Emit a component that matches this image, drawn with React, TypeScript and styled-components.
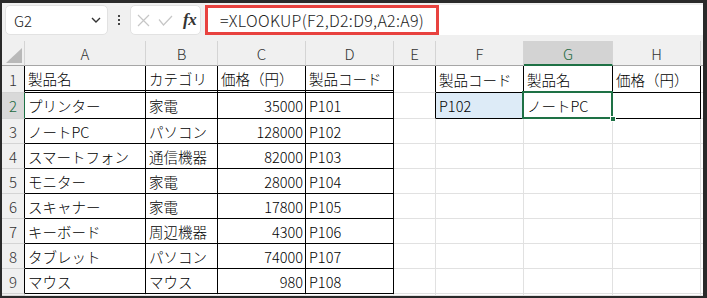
import React from 'react';
import styled, { createGlobalStyle, css } from 'styled-components';

const GlobalStyle = createGlobalStyle`
  html, body {
    margin: 0;
    padding: 0;
    background: #ffffff;
  }
`;

const FONT = `"Noto Sans CJK JP", "Noto Sans", sans-serif`;
const GRID = '#e1e1e1';
const HEAD_LINE = '#d4d4d4';
const GREEN = '#1e7145';

type Row = (string | number)[];

const rows: Row[] = [
  ['製品名', 'カテゴリ', '価格（円）', '製品コード', '', '製品コード', '製品名', '価格（円）'],
  ['プリンター', '家電', 35000, 'P101', '', 'P102', 'ノートPC', ''],
  ['ノートPC', 'パソコン', 128000, 'P102'],
  ['スマートフォン', '通信機器', 82000, 'P103'],
  ['モニター', '家電', 28000, 'P104'],
  ['スキャナー', '家電', 17800, 'P105'],
  ['キーボード', '周辺機器', 4300, 'P106'],
  ['タブレット', 'パソコン', 74000, 'P107'],
  ['マウス', 'マウス', 980, 'P108'],
];

const columns = ['A', 'B', 'C', 'D', 'E', 'F', 'G', 'H'];

export default function App() {
  const sheetRows = [...rows, []];

  return (
    <>
      <GlobalStyle />
      <Frame>
        <FormulaBar>
          <NameBox>
            <span>G2</span>
            <svg width="10" height="6" viewBox="0 0 10 6">
              <path d="M1 1 L5 5 L9 1" fill="none" stroke="#333" strokeWidth="1.4" />
            </svg>
          </NameBox>
          <Dots>
            <i />
            <i />
            <i />
          </Dots>
          <FxBox>
            <svg width="13" height="13" viewBox="0 0 13 13">
              <path d="M1 1 L12 12 M12 1 L1 12" stroke="#c6c6c6" strokeWidth="1.2" fill="none" />
            </svg>
            <svg width="15" height="11" viewBox="0 0 15 11">
              <path d="M1 4.5 L5.5 10 L14 1" stroke="#c6c6c6" strokeWidth="1.2" fill="none" />
            </svg>
            <Fx>fx</Fx>
          </FxBox>
          <FormulaInput>
            <Highlight>=XLOOKUP(F2,D2:D9,A2:A9)</Highlight>
          </FormulaInput>
        </FormulaBar>

        <Sheet>
          <Corner>
            <svg width="16" height="15" viewBox="0 0 16 15">
              <path d="M16 0 L16 15 L0 15 Z" fill="#b9b9b9" />
            </svg>
          </Corner>
          {columns.map((c) => (
            <ColHead key={c} $active={c === 'G'}>
              {c}
            </ColHead>
          ))}
          <ColHead $filler />

          {sheetRows.map((row, ri) => {
            const r = ri + 1;
            const isLast = r === sheetRows.length;
            return (
              <React.Fragment key={r}>
                <RowHead $active={r === 2} $edge={!isLast}>
                  {isLast ? '' : r}
                </RowHead>
                {columns.map((_, ci) => {
                  const c = ci + 1;
                  const v = row[ci];
                  const inT1 = r <= 9 && c <= 4;
                  const inT2 = r <= 2 && c >= 6;
                  const edgeE = r <= 2 && c === 5;
                  return (
                    <Cell
                      key={c}
                      $num={typeof v === 'number'}
                      $right={inT1 || inT2 || edgeE ? '#000' : GRID}
                      $bottom={inT1 || inT2 ? '#000' : GRID}
                      $double={r === 1 && c <= 4}
                      $fill={r === 2 && c === 6 ? '#ddebf7' : undefined}
                      $selected={r === 2 && c === 7}
                    >
                      {v ?? ''}
                    </Cell>
                  );
                })}
                <Cell $right="transparent" $bottom={GRID} />
              </React.Fragment>
            );
          })}
        </Sheet>
      </Frame>
    </>
  );
}

const Frame = styled.div`
  width: 707px;
  height: 298px;
  box-sizing: border-box;
  border-style: solid;
  border-color: #2a2a2a;
  border-width: 3px 4px 2px 2px;
  background: #f0f0f0;
  display: flex;
  flex-direction: column;
  overflow: hidden;
  font-family: ${FONT};
  color: #000;
`;

const FormulaBar = styled.div`
  height: 38px;
  flex: none;
  box-sizing: border-box;
  display: flex;
  align-items: flex-start;
  padding: 2px 0 0 3px;
`;

const NameBox = styled.div`
  width: 103px;
  height: 30px;
  box-sizing: border-box;
  background: #fff;
  border: 1px solid #e2e2e2;
  border-radius: 5px;
  display: flex;
  align-items: center;
  justify-content: space-between;
  padding: 0 6px 0 8px;
  font-size: 15px;
  font-weight: 300;
  color: #222;
`;

const Dots = styled.div`
  width: 22px;
  height: 30px;
  display: flex;
  flex-direction: column;
  align-items: center;
  justify-content: center;
  gap: 2px;
  & > i {
    display: block;
    width: 2px;
    height: 2px;
    background: #444;
  }
`;

const FxBox = styled.div`
  width: 71px;
  height: 30px;
  box-sizing: border-box;
  background: #fff;
  border: 1px solid #e2e2e2;
  border-radius: 5px;
  display: flex;
  align-items: center;
  padding: 0 0 0 6px;
  gap: 8px;
  margin-right: 4px;
`;

const Fx = styled.span`
  font-family: "Liberation Serif", serif;
  font-style: italic;
  font-weight: bold;
  font-size: 17px;
  color: #333;
  margin-left: 2px;
  letter-spacing: -0.5px;
`;

const FormulaInput = styled.div`
  flex: 1;
  height: 30px;
  background: #fff;
  display: flex;
`;

const Highlight = styled.div`
  width: 234px;
  height: 30px;
  box-sizing: border-box;
  border: 3px solid #e8423f;
  display: flex;
  align-items: center;
  padding-left: 12px;
  font-size: 16px;
  font-weight: 300;
  letter-spacing: 0.3px;
  color: #222;
  white-space: nowrap;
`;

const Sheet = styled.div`
  flex: 1;
  display: grid;
  grid-template-columns: 23px 121px 72px 88px 88px 42px 88px 89px 88px 1fr;
  grid-template-rows: 25px 27px 26px repeat(7, 25px) 1fr;
  background: #fff;
`;

const headBase = css`
  background: #f0f0f0;
  box-sizing: border-box;
  display: flex;
  align-items: center;
  justify-content: center;
  font-size: 15px;
  font-weight: 300;
  color: #333;
`;

const Corner = styled.div`
  ${headBase};
  border-right: 1px solid ${HEAD_LINE};
  border-bottom: 1px solid #a6a6a6;
  align-items: flex-end;
  justify-content: flex-end;
  padding: 0 2px 2px 0;
`;

const ColHead = styled.div<{ $active?: boolean; $filler?: boolean }>`
  ${headBase};
  border-right: 1px solid ${(p) => (p.$filler ? 'transparent' : HEAD_LINE)};
  border-bottom: ${(p) => (p.$active ? `2px solid ${GREEN}` : '1px solid #a6a6a6')};
  background: ${(p) => (p.$active ? '#d3d3d3' : '#f0f0f0')};
  color: ${(p) => (p.$active ? '#1e6b42' : '#333')};
  padding-top: ${(p) => (p.$active ? '1px' : '0')};
`;

const RowHead = styled.div<{ $active?: boolean; $edge?: boolean }>`
  ${headBase};
  border-bottom: 1px solid ${HEAD_LINE};
  border-right: 1px solid ${(p) => (p.$active ? GREEN : p.$edge ? '#000' : HEAD_LINE)};
  background: ${(p) => (p.$active ? '#d9d9d9' : '#f0f0f0')};
  color: ${(p) => (p.$active ? '#1e6b42' : '#333')};
`;

const Cell = styled.div<{
  $num?: boolean;
  $right: string;
  $bottom: string;
  $double?: boolean;
  $fill?: string;
  $selected?: boolean;
}>`
  position: relative;
  box-sizing: border-box;
  display: flex;
  align-items: center;
  justify-content: ${(p) => (p.$num ? 'flex-end' : 'flex-start')};
  padding: 0 2px 0 3px;
  font-size: 14.5px;
  font-weight: 300;
  white-space: nowrap;
  overflow: visible;
  background: ${(p) => p.$fill ?? '#fff'};
  border-right: 1px solid ${(p) => p.$right};
  border-bottom: ${(p) => (p.$double ? '3px double #000' : `1px solid ${p.$bottom}`)};
  ${(p) =>
    p.$selected &&
    css`
      &::after {
        content: '';
        position: absolute;
        left: -2px;
        top: -2px;
        right: -1px;
        bottom: -1px;
        border: 2px solid ${GREEN};
        pointer-events: none;
      }
      &::before {
        content: '';
        position: absolute;
        right: -4px;
        bottom: -4px;
        width: 6px;
        height: 6px;
        background: ${GREEN};
        border: 1px solid #fff;
        box-sizing: border-box;
        z-index: 2;
      }
    `}
`;
